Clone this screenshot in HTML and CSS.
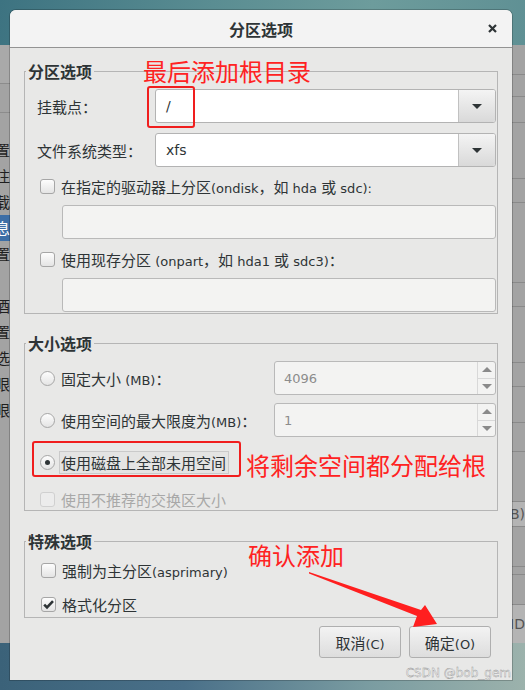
FILE: index.html
```html
<!DOCTYPE html>
<html lang="zh-CN">
<head>
<meta charset="utf-8">
<title>分区选项</title>
<link rel="stylesheet" href="styles.css">
</head>
<body>
<div class="desktop">
  <div class="sky"></div>
  <div class="appwin">
    <div class="app-left">
      <div class="al-top"></div>
      <div class="al-bar"></div>
      <div class="al-rows">
        <div>置</div>
        <div>注</div>
        <div>载</div>
        <div class="sel">息</div>
        <div>置</div>
        <div></div>
        <div>酒</div>
        <div>置</div>
        <div>选</div>
        <div>眼</div>
        <div>眼</div>
      </div>
    </div>
    <div class="app-right">
      <div></div><div></div><div></div><div></div><div></div><div></div><div></div><div></div><div></div><div></div><div></div><div></div>
      <div class="ar-lite">B)</div>
      <div></div><div></div><div></div>
      <div class="ar-lite">ID</div>
      <div></div><div></div>
    </div>
  </div>
  <div class="floor"></div>

  <div class="dialog">
    <div class="titlebar">
      <span class="title">分区选项</span>
      <span class="close"><svg width="9" height="9" viewBox="0 0 9 9"><path d="M1 1L8 8M8 1L1 8" stroke="#2e3436" stroke-width="2.2"/></svg></span>
    </div>
    <div class="dbody">
      <fieldset class="grp">
        <legend>分区选项</legend>
        <div class="grp-in g1">
          <div class="frow fr1">
            <span class="flabel">挂载点：</span>
            <div class="combo"><span class="cval lat">/</span><span class="cbtn"><i class="tri"></i></span></div>
          </div>
          <div class="frow fr2">
            <span class="flabel">文件系统类型：</span>
            <div class="combo"><span class="cval lat">xfs</span><span class="cbtn"><i class="tri"></i></span></div>
          </div>
          <div class="crow">
            <span class="cb"></span><span>在指定的驱动器上分区<span class="lat">(ondisk</span>，如<span class="lat"> hda </span>或<span class="lat"> sdc):</span></span>
          </div>
          <div class="entry e1"></div>
          <div class="crow">
            <span class="cb"></span><span>使用现存分区<span class="lat"> (onpart</span>，如<span class="lat"> hda1 </span>或<span class="lat"> sdc3)</span>：</span>
          </div>
          <div class="entry"></div>
        </div>
      </fieldset>

      <fieldset class="grp grp2">
        <legend>大小选项</legend>
        <div class="grp-in g2">
          <div class="srow">
            <span class="rb"></span><span>固定大小<span class="lat"> (MB)</span>：</span>
            <div class="spin"><span class="sval lat">4096</span><span class="sbtns"><span class="sup"><i class="tup"></i></span><span class="sdn"><i class="tdn"></i></span></span></div>
          </div>
          <div class="srow">
            <span class="rb"></span><span>使用空间的最大限度为<span class="lat">(MB)</span>：</span>
            <div class="spin"><span class="sval lat">1</span><span class="sbtns"><span class="sup"><i class="tup"></i></span><span class="sdn"><i class="tdn"></i></span></span></div>
          </div>
          <div class="srow srow3">
            <span class="rb on"><i class="dot"></i></span><span class="focus">使用磁盘上全部未用空间</span>
          </div>
          <div class="crow dis">
            <span class="cb"></span><span>使用不推荐的交换区大小</span>
          </div>
        </div>
      </fieldset>

      <fieldset class="grp grp3">
        <legend>特殊选项</legend>
        <div class="grp-in g3">
          <div class="crow">
            <span class="cb"></span><span>强制为主分区<span class="lat">(asprimary)</span></span>
          </div>
          <div class="crow">
            <span class="cb on"><svg width="13" height="13" viewBox="0 0 13 13"><path d="M2.2 6.6L5 9.4L11 3.2" fill="none" stroke="#2e3436" stroke-width="2.6"/></svg></span><span>格式化分区</span>
          </div>
        </div>
      </fieldset>

      <div class="actions">
        <button class="btn">取消<span class="lat">(C)</span></button>
        <button class="btn">确定<span class="lat">(O)</span></button>
      </div>
    </div>
  </div>

  <div class="mark box1"></div>
  <div class="mark box2"></div>
  <div class="note n1">最后添加根目录</div>
  <div class="note n2">将剩余空间都分配给根</div>
  <div class="note n3">确认添加</div>
  <svg class="arrow" width="525" height="690" viewBox="0 0 525 690">
    <polygon points="309,572 421,610 425,605 437,624 413,627 417,616 309,573.6" fill="#ff1f1f"/>
  </svg>
  <div class="wm">CSDN @bob_gem</div>
</div>
</body>
</html>
```

FILE: styles.css
```css
body {
  margin: 0;
}

.desktop {
  position: relative;
  width: 525px;
  height: 690px;
  overflow: hidden;
  display: flex;
  flex-direction: column;
  font-family: "Noto Sans CJK SC", sans-serif;
}

.sky {
  height: 45px;
  background: linear-gradient(100deg, #3d7381 0%, #5a8d92 40%, #6d9c9c 70%, #5f9094 100%);
}

.appwin {
  height: 598px;
  background: #a3a3a3;
  display: flex;
  justify-content: space-between;
}

.floor {
  flex: 1;
  background: linear-gradient(90deg, #3b6279 0%, #4a7089 35%, #7a9ca1 70%, #9cb2ac 100%);
}

/* background application window fragments */
.app-left {
  width: 10px;
  overflow: hidden;
  display: flex;
  flex-direction: column;
}

.al-top {
  height: 38px;
  border-bottom: 1px solid #8c8c8c;
  background: #a9a9a9;
}

.al-bar {
  height: 28px;
  border-bottom: 1px solid #8c8c8c;
}

.al-rows {
  padding-top: 24px;
}

.al-rows div {
  height: 26px;
  line-height: 26px;
  font-size: 15px;
  color: #1e1e1e;
  white-space: nowrap;
  text-indent: -5px;
}

.al-rows .sel {
  background: #3d6ea6;
  color: #fff;
}

.app-right {
  width: 13px;
  overflow: hidden;
  display: grid;
  grid-template-rows: 30px 22px 26px 56px 24px 80px 24px 56px 24px 36px 29px 50px 25px 40px 8px 30px 39px 4px 1fr;
}

.app-right div {
  border-bottom: 1px solid #8a8a8a;
  font-family: "DejaVu Sans", sans-serif;
  font-size: 14px;
  line-height: 24px;
  color: #555;
  white-space: nowrap;
  text-indent: -2px;
  overflow: hidden;
}

.app-right .ar-lite {
  background: #b4b4b4;
  display: flex;
  align-items: center;
}

/* dialog */
.dialog {
  position: absolute;
  left: 10px;
  top: 10px;
  width: 502px;
  height: 670px;
  background: #e8e8e7;
  border-radius: 6px 6px 0 0;
  box-shadow: 0 0 0 1px rgba(0, 0, 0, 0.2);
  display: flex;
  flex-direction: column;
  color: #2e3436;
  font-size: 15px;
}

.lat {
  font-family: "DejaVu Sans", sans-serif;
  font-size: 13px;
}

.titlebar {
  height: 37px;
  border-bottom: 1px solid #939393;
  background: #f3f3f3;
  border-radius: 6px 6px 0 0;
  display: grid;
  grid-template-columns: 1fr auto 1fr;
  align-items: center;
}

.title {
  grid-column: 2;
  font-size: 16px;
  font-weight: 700;
}

.close {
  grid-column: 3;
  justify-self: end;
  margin-right: 15px;
  display: flex;
}

.dbody {
  padding: 14px 14px 0;
  display: flex;
  flex-direction: column;
}

.grp {
  margin: 0;
  padding: 0;
  border: 1px solid #b5b5b5;
  min-width: 0;
}

.grp legend {
  margin-left: 1px;
  padding: 0 2px;
  font-size: 16px;
  font-weight: 700;
  line-height: 18px;
}

.grp2 {
  margin-top: 20px;
}

.grp3 {
  margin-top: 21px;
}

.grp-in {
  display: flex;
  flex-direction: column;
  padding: 9px 1px 1px 12px;
}

.g2 {
  padding-bottom: 0;
}

.g3 {
  padding-bottom: 2px;
}

.frow {
  display: flex;
  align-items: center;
  height: 34px;
}

.fr1 {
  margin-bottom: 10px;
}

.fr2 {
  margin-bottom: 8px;
}

.flabel {
  width: 118px;
}

.combo {
  flex: 1;
  height: 34px;
  box-sizing: border-box;
  display: flex;
  border: 1px solid #b3b3b3;
  border-radius: 3px;
  background: #fff;
}

.cval {
  flex: 1;
  padding-left: 10px;
  display: flex;
  align-items: center;
}

.cval.lat {
  font-size: 14px;
}

.cbtn {
  width: 36px;
  border-left: 1px solid #c1c1c1;
  background: linear-gradient(#f4f4f4, #d9d9d9);
  border-radius: 0 2px 2px 0;
  display: flex;
  align-items: center;
  justify-content: center;
}

.tri {
  width: 0;
  height: 0;
  border-left: 5px solid transparent;
  border-right: 5px solid transparent;
  border-top: 5px solid #2e3436;
}

.crow {
  display: flex;
  align-items: center;
  height: 22px;
  margin-left: 3px;
  gap: 6px;
  margin-bottom: 8px;
}

.crow:last-child {
  margin-bottom: 0;
}

.g3 .crow {
  margin-left: 4px;
  margin-bottom: 12px;
}

.g3 .crow:last-child {
  margin-bottom: 0;
}

.cb {
  width: 15px;
  height: 15px;
  box-sizing: border-box;
  border: 1px solid #a6a6a6;
  border-radius: 3px;
  background: linear-gradient(#fdfdfd, #e4e4e4);
  display: flex;
  align-items: center;
  justify-content: center;
  flex: none;
}

.dis {
  color: #a8a8a8;
}

.dis .cb {
  border-color: #d0d0d0;
  background: #ececec;
}

.entry {
  height: 34px;
  box-sizing: border-box;
  margin-left: 25px;
  border: 1px solid #b9b9b9;
  border-radius: 3px;
  background: #f3f3f2;
}

.e1 {
  margin-bottom: 9px;
}

.srow {
  display: flex;
  align-items: center;
  height: 34px;
  margin-left: 3px;
  gap: 6px;
  margin-bottom: 8px;
}

.srow3 {
  gap: 4px;
  margin-bottom: 9px;
}

.rb {
  width: 15px;
  height: 15px;
  box-sizing: border-box;
  border: 1px solid #a6a6a6;
  border-radius: 50%;
  background: linear-gradient(#fdfdfd, #e4e4e4);
  display: flex;
  align-items: center;
  justify-content: center;
  flex: none;
}

.dot {
  width: 5px;
  height: 5px;
  border-radius: 50%;
  background: #2e3436;
}

.focus {
  height: 23px;
  box-sizing: border-box;
  border: 1px solid #cacaca;
  background: #e4e4e3;
  padding: 0 2px 0 1px;
  display: flex;
  align-items: center;
}

.spin {
  margin-left: auto;
  width: 222px;
  height: 34px;
  box-sizing: border-box;
  border: 1px solid #b9b9b9;
  border-radius: 3px;
  background: #f3f3f2;
  display: flex;
}

.sval {
  flex: 1;
  padding-left: 9px;
  color: #8c8c8c;
  display: flex;
  align-items: center;
}

.sbtns {
  width: 17px;
  border-left: 1px solid #d8d8d8;
  display: flex;
  flex-direction: column;
}

.sup,
.sdn {
  flex: 1;
  display: flex;
  align-items: center;
  justify-content: center;
}

.sup {
  border-bottom: 1px solid #d8d8d8;
}

.tup {
  width: 0;
  height: 0;
  border-left: 5px solid transparent;
  border-right: 5px solid transparent;
  border-bottom: 5px solid #8a8a8a;
}

.tdn {
  width: 0;
  height: 0;
  border-left: 5px solid transparent;
  border-right: 5px solid transparent;
  border-top: 5px solid #8a8a8a;
}

.actions {
  display: flex;
  justify-content: flex-end;
  gap: 8px;
  margin-top: 8px;
  padding-right: 7px;
}

.btn {
  width: 82px;
  height: 32px;
  box-sizing: border-box;
  border: 1px solid #afafaf;
  border-radius: 3px;
  background: linear-gradient(#f3f3f3, #dddddd);
  font: inherit;
  color: #2e3436;
  padding: 0;
}

/* annotations */
.mark {
  position: absolute;
  box-sizing: border-box;
  border: 2px solid #f01e1e;
  border-radius: 3px;
}

.box1 {
  left: 147px;
  top: 86px;
  width: 48px;
  height: 42px;
}

.box2 {
  left: 32px;
  top: 441px;
  width: 209px;
  height: 36px;
}

.note {
  position: absolute;
  font-size: 24px;
  line-height: 28px;
  color: #ff2222;
  white-space: nowrap;
}

.n1 {
  left: 143px;
  top: 57px;
}

.n2 {
  left: 246px;
  top: 451px;
}

.n3 {
  left: 248px;
  top: 541px;
}

.arrow {
  position: absolute;
  left: 0;
  top: 0;
}

.wm {
  position: absolute;
  right: 14px;
  top: 665px;
  font-family: "DejaVu Sans", sans-serif;
  font-size: 12px;
  line-height: 16px;
  color: #f7f7f7;
  -webkit-text-stroke: 0.35px #8a8a8a;
  white-space: nowrap;
}
```
